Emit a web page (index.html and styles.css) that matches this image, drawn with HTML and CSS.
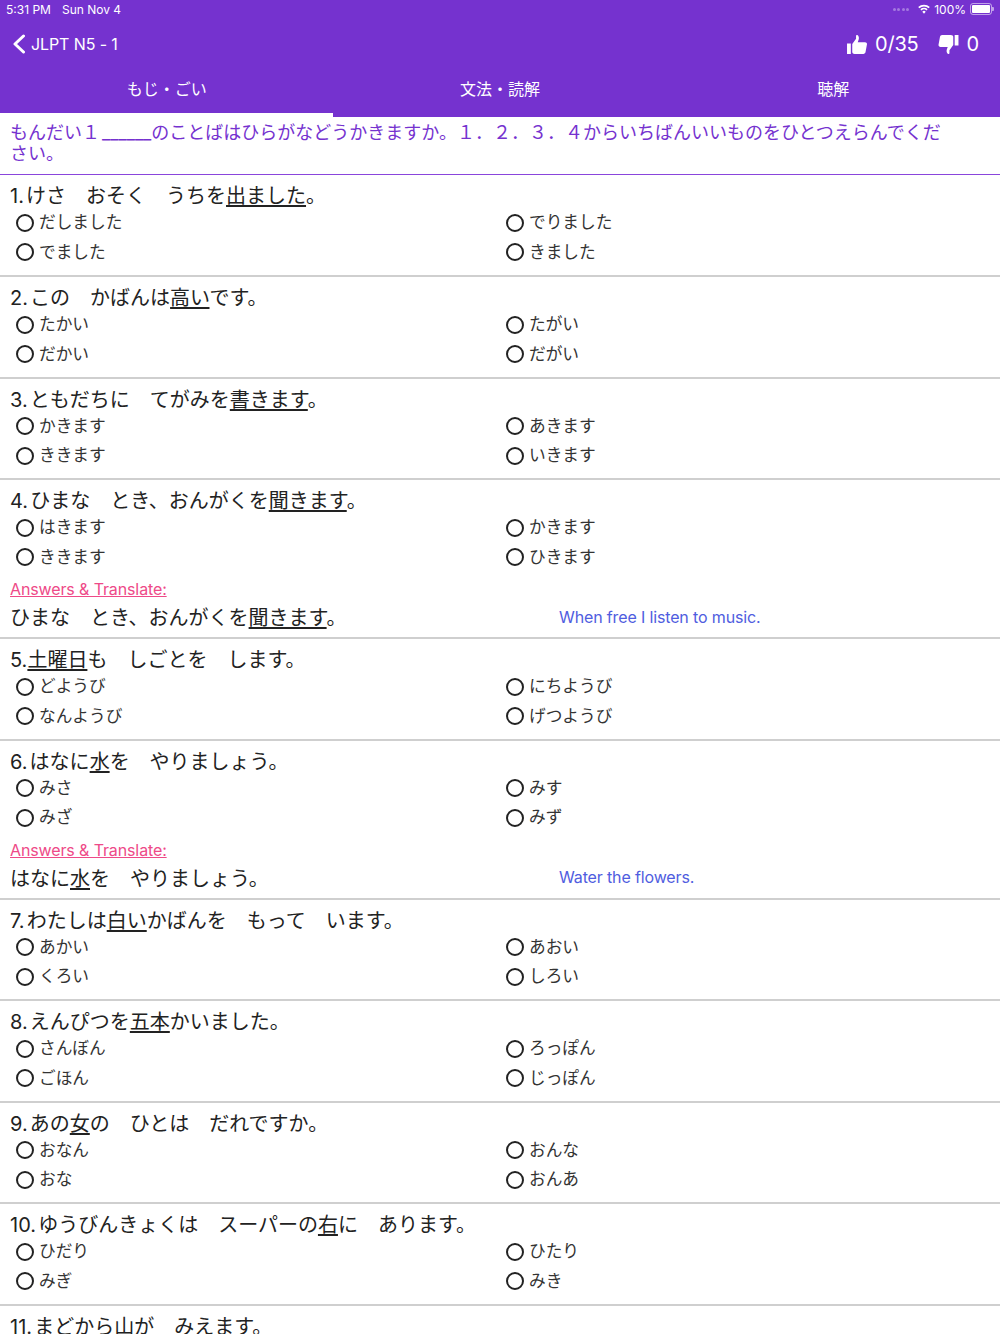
FILE: index.html
```html
<!DOCTYPE html>
<html lang="ja">
<head>
<meta charset="utf-8">
<title>JLPT N5 - 1</title>
<link rel="stylesheet" href="styles.css">
</head>
<body>
<header class="header">
  <div class="status">
    <div class="status-left"><span>5:31 PM</span><span>Sun Nov 4</span></div>
    <div class="status-right">
      <span class="dots"><i></i><i></i><i></i><i></i></span>
      <svg class="wifi" width="12" height="10" viewBox="0 0 15 12"><path d="M1 4.300a9.300 9.300 0 0 1 13 0M3.700 7a5.500 5.500 0 0 1 7.600 0" fill="none" stroke="#fff" stroke-width="2.200"/><path d="M5.400 9.300a3 3 0 0 1 4.200 0L7.500 11.800Z" fill="#fff"/></svg>
      <span>100%</span>
      <span class="battery"><span class="battery-fill"></span></span>
    </div>
  </div>
  <div class="nav">
    <div class="nav-left">
      <svg width="14" height="20" viewBox="0 0 14 20"><path d="M11.5 2 3 10l8.500 8" fill="none" stroke="#fff" stroke-width="3" stroke-linecap="round" stroke-linejoin="round"/></svg>
      <span>JLPT N5 - 1</span>
    </div>
    <div class="nav-right">
      <svg width="20" height="19" viewBox="0 0 21 20"><path d="M0 9h4v11H0Z M5.500 9.500 9.500 4V0.800c0-.8 1-1 1.700-.5 1.400 1 1.600 3 .9 5L11.300 7.500H19c1.300 0 2.200 1 2 2.300l-1.500 8.200c-.2 1.100-1.100 2-2.300 2H8c-1.400 0-2.500-.8-2.500-2Z" fill="#fff"/></svg>
      <span class="score">0/35</span>
      <svg class="down" width="21" height="19" viewBox="0 0 21 20"><path d="M17 0h4v11h-4Z M15.500 10.500 11.500 16v3.200c0 .8-1 1-1.700.5-1.400-1-1.600-3-.9-5l.8-2.200H2c-1.300 0-2.200-1-2-2.300L1.500 2C1.700.9 2.600 0 3.800 0H13c1.400 0 2.500.8 2.500 2Z" fill="#fff"/></svg>
      <span class="score">0</span>
    </div>
  </div>
  <div class="tabs">
    <div class="tab active">もじ・ごい</div>
    <div class="tab">文法・読解</div>
    <div class="tab">聴解</div>
  </div>
</header>
<main class="content">
  <p class="instruction">もんだい１ ______のことばはひらがなどうかきますか。１．２．３．４からいちばんいいものをひとつえらんでください。</p>

  <section class="q">
    <p class="qt">1. けさ　おそく　うちを<u>出ました</u>。</p>
    <div class="opts">
      <label class="opt"><span class="radio"></span>だしました</label><label class="opt"><span class="radio"></span>でりました</label>
      <label class="opt"><span class="radio"></span>でました</label><label class="opt"><span class="radio"></span>きました</label>
    </div>
  </section>
  <section class="q">
    <p class="qt">2. この　かばんは<u>高い</u>です。</p>
    <div class="opts">
      <label class="opt"><span class="radio"></span>たかい</label><label class="opt"><span class="radio"></span>たがい</label>
      <label class="opt"><span class="radio"></span>だかい</label><label class="opt"><span class="radio"></span>だがい</label>
    </div>
  </section>
  <section class="q">
    <p class="qt">3. ともだちに　てがみを<u>書きます</u>。</p>
    <div class="opts">
      <label class="opt"><span class="radio"></span>かきます</label><label class="opt"><span class="radio"></span>あきます</label>
      <label class="opt"><span class="radio"></span>ききます</label><label class="opt"><span class="radio"></span>いきます</label>
    </div>
  </section>
  <section class="q">
    <p class="qt">4. ひまな　とき、おんがくを<u>聞きます</u>。</p>
    <div class="opts">
      <label class="opt"><span class="radio"></span>はきます</label><label class="opt"><span class="radio"></span>かきます</label>
      <label class="opt"><span class="radio"></span>ききます</label><label class="opt"><span class="radio"></span>ひきます</label>
    </div>
    <div class="answer">
      <a class="answer-link">Answers &amp; Translate:</a>
      <div class="answer-row"><p class="answer-ja">ひまな　とき、おんがくを<u>聞きます</u>。</p><p class="answer-en">When free I listen to music.</p></div>
    </div>
  </section>
  <section class="q">
    <p class="qt">5.<u>土曜日</u>も　しごとを　します。</p>
    <div class="opts">
      <label class="opt"><span class="radio"></span>どようび</label><label class="opt"><span class="radio"></span>にちようび</label>
      <label class="opt"><span class="radio"></span>なんようび</label><label class="opt"><span class="radio"></span>げつようび</label>
    </div>
  </section>
  <section class="q">
    <p class="qt">6. はなに<u>水</u>を　やりましょう。</p>
    <div class="opts">
      <label class="opt"><span class="radio"></span>みさ</label><label class="opt"><span class="radio"></span>みす</label>
      <label class="opt"><span class="radio"></span>みざ</label><label class="opt"><span class="radio"></span>みず</label>
    </div>
    <div class="answer">
      <a class="answer-link">Answers &amp; Translate:</a>
      <div class="answer-row"><p class="answer-ja">はなに<u>水</u>を　やりましょう。</p><p class="answer-en">Water the flowers.</p></div>
    </div>
  </section>
  <section class="q">
    <p class="qt">7. わたしは<u>白い</u>かばんを　もって　います。</p>
    <div class="opts">
      <label class="opt"><span class="radio"></span>あかい</label><label class="opt"><span class="radio"></span>あおい</label>
      <label class="opt"><span class="radio"></span>くろい</label><label class="opt"><span class="radio"></span>しろい</label>
    </div>
  </section>
  <section class="q">
    <p class="qt">8. えんぴつを<u>五本</u>かいました。</p>
    <div class="opts">
      <label class="opt"><span class="radio"></span>さんぼん</label><label class="opt"><span class="radio"></span>ろっぽん</label>
      <label class="opt"><span class="radio"></span>ごほん</label><label class="opt"><span class="radio"></span>じっぽん</label>
    </div>
  </section>
  <section class="q">
    <p class="qt">9. あの<u>女</u>の　ひとは　だれですか。</p>
    <div class="opts">
      <label class="opt"><span class="radio"></span>おなん</label><label class="opt"><span class="radio"></span>おんな</label>
      <label class="opt"><span class="radio"></span>おな</label><label class="opt"><span class="radio"></span>おんあ</label>
    </div>
  </section>
  <section class="q">
    <p class="qt">10. ゆうびんきょくは　スーパーの<u>右</u>に　あります。</p>
    <div class="opts">
      <label class="opt"><span class="radio"></span>ひだり</label><label class="opt"><span class="radio"></span>ひたり</label>
      <label class="opt"><span class="radio"></span>みぎ</label><label class="opt"><span class="radio"></span>みき</label>
    </div>
  </section>
  <section class="q">
    <p class="qt">11. まどから山が　みえます。</p>
  </section>
</main>
</body>
</html>
```
FILE: styles.css
```css
* { box-sizing: border-box; }
html, body { margin: 0; padding: 0; height: 1334px; overflow: hidden; background: #fff; }
body { font-family: Inter, "Noto Sans CJK JP", sans-serif; color: #222; }
p { margin: 0; }

.header { background: #7532cf; color: #fff; height: 117px; display: flex; flex-direction: column; }
.status { height: 20px; padding: 0 6px 2px 6px; display: flex; justify-content: space-between; align-items: center; font-size: 12px; }
.status-left { display: flex; gap: 11px; }
.status-right { display: flex; align-items: center; gap: 4px; }
.dots { display: flex; gap: 1.500px; margin-right: 5px; }
.dots i { width: 3px; height: 3px; border-radius: 50%; background: rgba(255,255,255,.35); }
.battery { position: relative; width: 22px; height: 12px; margin-right: 2px; border: 1px solid rgba(255,255,255,.55); border-radius: 3px; padding: 1px; display: flex; }
.battery::after { content: ""; position: absolute; right: -3px; top: 3px; width: 2px; height: 4px; border-radius: 0 1px 1px 0; background: rgba(255,255,255,.55); }
.battery-fill { flex: 1; background: #fff; border-radius: 1px; }

.nav { height: 48px; display: flex; justify-content: space-between; align-items: center; padding: 0 21px 0 12px; }
.nav-left { display: flex; align-items: center; gap: 5px; font-size: 16px; letter-spacing: -0.1px; }
.nav-right { display: flex; align-items: center; font-size: 20px; letter-spacing: -0.2px; gap: 8px; }
.nav-right .down { margin-left: 11px; }

.tabs { flex: 1; display: flex; }
.tab { flex: 1; display: flex; align-items: center; justify-content: center; font-size: 16px; padding-bottom: 6px; border-bottom: 4px solid transparent; }
.tab.active { border-bottom-color: #fff; }

.instruction { padding: 5px 50px 9px 10px; font-size: 18px; line-height: 21px; color: #7532cf; word-spacing: -3px; border-bottom: 1px solid #8a45dc; height: 58px; }

.q { padding: 8px 0 9px 10px; border-bottom: 2px solid #cfcfcf; height: 101.500px; }
.instruction + .q { height: 102px; }
.q:has(.answer) { height: 159px; }
.qt { font-size: 20px; line-height: 27px; color: #222; word-spacing: -3.500px; }
.qt u, .answer-ja u { text-underline-offset: 2px; }
.opts { display: grid; grid-template-columns: 490px 1fr; grid-auto-rows: 29.500px; margin-top: -2px; padding-left: 6px; }
.opt { display: flex; align-items: center; gap: 5px; font-size: 16.700px; line-height: 25px; color: #333; }
.radio { width: 18px; height: 18px; border: 2.300px solid #222; border-radius: 50%; }

.answer { margin-top: 6px; }
.answer-link { display: block; font-size: 16px; line-height: 22px; color: #ee4a88; text-decoration: underline; letter-spacing: -0.120px; }
.answer-row { display: grid; grid-template-columns: 549px 1fr; align-items: center; margin-top: 5px; }
.answer-ja { font-size: 20px; line-height: 27px; color: #222; }
.answer-en { font-size: 16px; letter-spacing: -0.140px; color: #4f5de0; margin-bottom: 4px; }
```
